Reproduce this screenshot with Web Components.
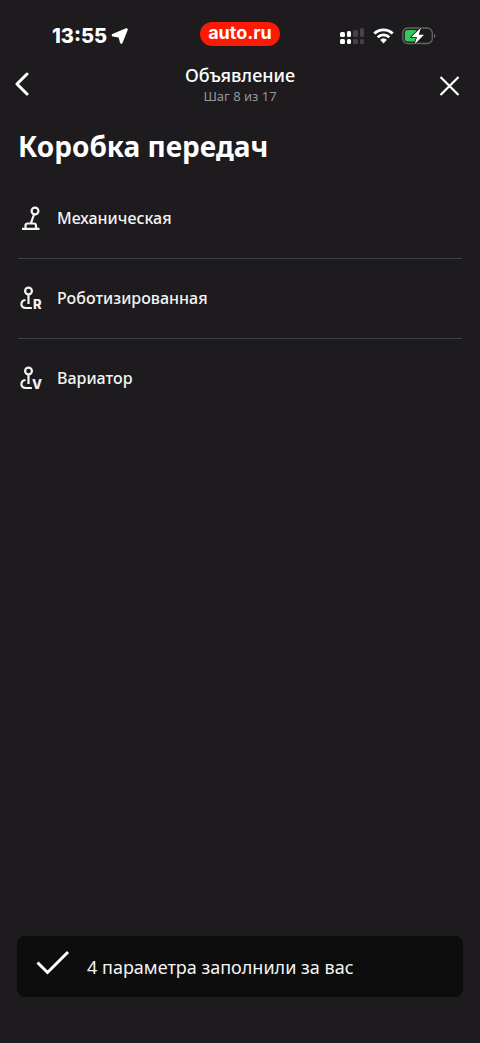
<!DOCTYPE html>
<html lang="ru">
<head>
<meta charset="utf-8">
<meta name="viewport" content="width=device-width, initial-scale=1">
<title>Объявление</title>
<style>
  html { height: 100%; }
  body {
    margin: 0;
    min-height: 100%;
    display: flex;
    background: #1d1b1e;
    color: #fff;
    font-family: "Noto Sans", "Open Sans", sans-serif;
  }
</style>
</head>
<body>
<listing-screen></listing-screen>

<template id="status-bar">
  <style>
    :host {
      display: grid;
      grid-template-columns: 1fr auto 1fr;
      align-items: start;
      padding: 22px 44px 0 52px;
    }
    svg { display: block; }
    .time, .signs { display: flex; align-items: center; height: 24px; padding-top: 2px; }
    .time { gap: 4px; font: 800 20px/24px Inter, sans-serif; }
    .signs { justify-content: flex-end; gap: 8px; }
    .brand {
      width: 64px;
      height: 24px;
      margin: 0 16px 0 8px;
      padding: 0 8px;
      border-radius: 12px;
      background: #fd1a04;
      font: 700 18px/22px Inter, sans-serif;
      text-align: center;
      white-space: nowrap;
    }
  </style>
  <div class="time"><span>13:55</span>
    <svg width="18" height="18" viewBox="0 0 18 18" aria-hidden="true"><path d="M15.500 2.500 10.300 15.500 8.700 9.500 2 8.200Z" fill="#fff" stroke="#fff" stroke-width="2.600" stroke-linejoin="round"/></svg>
  </div>
  <div class="brand">auto.ru</div>
  <div class="signs">
    <svg width="25" height="18" viewBox="0 0 25 18" aria-hidden="true">
      <g fill="#fff"><rect x="0" y="5" width="5" height="5" rx="1.500"/><rect x="7" y="4" width="4" height="6" rx="1.500"/><rect x="0" y="12" width="5" height="5" rx="1.500"/><rect x="7" y="12" width="4" height="5" rx="1.500"/></g>
      <g fill="#454346"><rect x="13" y="3" width="5" height="7" rx="1.500"/><rect x="20" y="1" width="4" height="9" rx="1.500"/><rect x="13" y="12" width="5" height="5" rx="1.500"/><rect x="20" y="12" width="4" height="5" rx="1.500"/></g>
    </svg>
    <svg width="21" height="16" viewBox="0 0 21 16" aria-hidden="true">
      <g fill="none" stroke="#fff" stroke-width="2.800"><path d="M1.300 5.600a13.200 13.200 0 0 1 18.400 0"/><path d="M4.700 9.300a8.300 8.300 0 0 1 11.600 0"/></g>
      <path d="M7.100 11.800a5 5 0 0 1 6.800 0L10.500 15.400Z" fill="#fff"/>
    </svg>
    <svg width="34" height="20" viewBox="0 0 34 20" aria-hidden="true">
      <rect x=".8" y="2" width="29.500" height="15.500" rx="5" fill="none" stroke="#66646a" stroke-width="1.300"/>
      <path d="M32 7.500q3 2.300 0 4.600Z" fill="#66646a"/>
      <rect x="2.800" y="4" width="13" height="11.500" rx="3" fill="#34c759"/>
      <path d="M19 1.500 9.500 11H15l-2.500 7.500L22 8.700h-5.300Z" fill="#fff" stroke="#1d1b1e" stroke-width="1.600" paint-order="stroke"/>
    </svg>
  </div>
</template>

<template id="step-header">
  <style>
    :host { display: grid; grid-template-columns: 44px 1fr 44px; align-items: center; padding: 14px 8px 0 0; }
    button { display: grid; place-items: center; height: 44px; padding: 0; border: 0; background: none; color: inherit; cursor: pointer; }
    svg { display: block; }
    .titles { text-align: center; padding-left: 8px; }
    ::slotted(h2) { margin: 0; font-size: 18px; line-height: 24px; font-weight: 500; }
    ::slotted(p) { margin: 0; font-size: 13px; line-height: 18px; color: #98969a; }
    .close { padding-top: 4px; }
  </style>
  <button type="button" aria-label="Назад"><svg width="24" height="24" viewBox="0 0 24 24"><path d="M17 2 7 12l10 10" fill="none" stroke="#fff" stroke-width="3" stroke-linecap="round" stroke-linejoin="round"/></svg></button>
  <div class="titles"><slot></slot></div>
  <button class="close" type="button" aria-label="Закрыть"><svg width="24" height="24" viewBox="0 0 24 24"><path d="m2.500 3 18 18M20.500 3l-18 18" fill="none" stroke="#fff" stroke-width="2.200"/></svg></button>
</template>

<template id="gear-option">
  <style>
    :host { display: block; }
    :host(:not(:last-of-type)) { border-bottom: 1px solid #414042; }
    button {
      display: flex; align-items: center; gap: 12px;
      width: 100%; height: 79px; padding: 0 0 2px;
      border: 0; background: none; color: #f4f4f4; cursor: pointer;
      font: 500 16px/24px "Noto Sans", sans-serif; text-align: left;
    }
    svg { display: none; flex: none; overflow: visible; }
    text { font: 800 13px Inter, sans-serif; }
    :host([kind="manual"]) .manual, :host([kind="robot"]) .robot, :host([kind="cvt"]) .cvt { display: block; }
  </style>
  <button type="button">
    <svg class="manual" width="27" height="24" viewBox="0 0 27 24" fill="none" stroke="#f4f4f4" stroke-width="2.200" aria-hidden="true"><circle cx="17" cy="5" r="3.400"/><path d="m16 8.500-3.200 9M4 22.900h17.500M7.500 22v-2.300q0-2.200 2.200-2.200h6q2.300 0 2.300 2.200V22"/></svg>
    <svg class="robot" width="27" height="24" viewBox="0 0 27 24" fill="none" stroke="#f4f4f4" stroke-width="2.200" aria-hidden="true"><circle cx="10.500" cy="5" r="3.400"/><path d="M10.500 8.600V18M7.500 14C2.200 14.600 1.900 22 7.500 22h6.400"/><text x="15" y="23" fill="#f4f4f4" stroke="none">R</text></svg>
    <svg class="cvt" width="27" height="24" viewBox="0 0 27 24" fill="none" stroke="#f4f4f4" stroke-width="2.200" aria-hidden="true"><circle cx="10.500" cy="5" r="3.400"/><path d="M10.500 8.600V18M7.500 14C2.200 14.600 1.900 22 7.500 22h6.400"/><text x="14" y="23" fill="#f4f4f4" stroke="none">V</text></svg>
    <span><slot></slot></span>
  </button>
</template>

<template id="hint-toast">
  <style>
    :host {
      display: flex; align-items: center; gap: 16px;
      min-height: 61px; box-sizing: border-box; padding: 0 18px;
      border-radius: 8px; background: #0d0d0d; color: #f4f4f4;
      font-size: 18px; line-height: 24px;
    }
    svg { display: block; flex: none; }
  </style>
  <svg width="36" height="36" viewBox="0 0 36 36" aria-hidden="true"><path d="m2.500 13.500 10 10L33 3" fill="none" stroke="#fff" stroke-width="3"/></svg>
  <span><slot></slot></span>
</template>

<template id="listing-screen">
  <style>
    :host { display: flex; flex-direction: column; flex: 1; min-width: 0; }
    main { flex: 1; padding: 0 18px; }
    h1 { margin: 20px 0 13px; font-size: 28px; line-height: 40px; font-weight: 700; }
    footer { padding: 16px 17px 46px; }
  </style>
  <status-bar></status-bar>
  <step-header><h2>Объявление</h2><p>Шаг 8 из 17</p></step-header>
  <main>
    <h1>Коробка передач</h1>
    <gear-option kind="manual">Механическая</gear-option>
    <gear-option kind="robot">Роботизированная</gear-option>
    <gear-option kind="cvt">Вариатор</gear-option>
  </main>
  <footer><hint-toast>4 параметра заполнили за вас</hint-toast></footer>
</template>

<script>
  class TemplateElement extends HTMLElement {
    constructor() {
      super();
      const template = document.getElementById(this.localName);
      this.attachShadow({ mode: "open" }).append(template.content.cloneNode(true));
    }
  }
  customElements.define("status-bar", class extends TemplateElement {});
  customElements.define("step-header", class extends TemplateElement {});
  customElements.define("gear-option", class extends TemplateElement {});
  customElements.define("hint-toast", class extends TemplateElement {});
  customElements.define("listing-screen", class extends TemplateElement {});
</script>
</body>
</html>
